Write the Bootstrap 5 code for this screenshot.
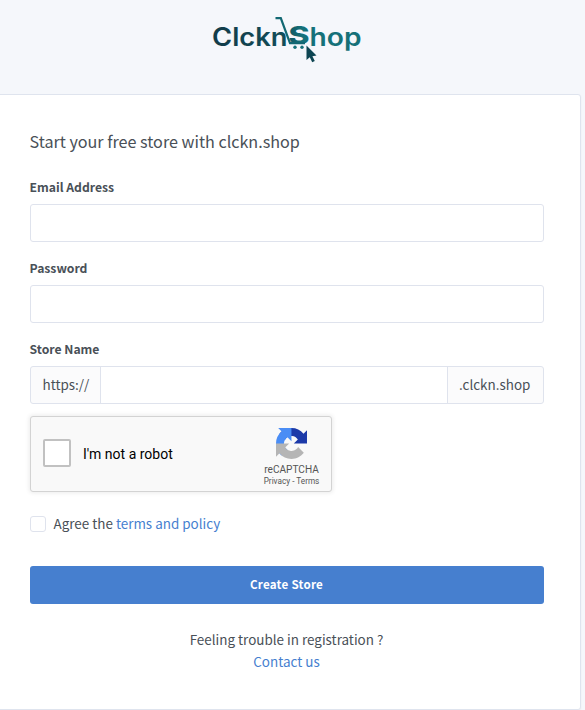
<!DOCTYPE html>
<html lang="en">
<head>
<meta charset="utf-8">
<meta name="viewport" content="width=device-width, initial-scale=1">
<title>Clckn Shop</title>
<link href="https://cdn.jsdelivr.net/npm/bootstrap@5.3.0/dist/css/bootstrap.min.css" rel="stylesheet">
<style>
body{background:#f5f7fb;color:#495057;font-family:"Noto Sans CJK SC","Noto Sans",sans-serif;font-size:13.45px;line-height:22px;height:710px;overflow:hidden}
a{color:#467fcf;text-decoration:none}
.brand-bar{height:94px;padding:10px 0 0 205px}
.signup{margin-left:-7px;width:588px;height:616px;border:1px solid #dfe4ee;border-radius:3px;box-shadow:0 1px 2px rgba(0,0,0,.05);padding:33px 36px 0}
.signup h1{font-size:16.15px;line-height:26px;font-weight:400;margin:0 0 23px -.5px}
.form-label{font-size:12.2px;font-weight:700;line-height:20px;margin:0 0 7px -.5px;display:block;color:#495057}
.form-control,.input-group-text{height:38px;border-color:#dfe3ed;border-radius:3px;font-size:13.45px;color:#495057}
.input-group-text{background:#fbfbfc;padding:0 12px 2px 11.5px;line-height:22px}
.scheme{width:71px}
.domain{width:97px;padding-left:11px}
.field{margin-bottom:16px}
.captcha{width:302px;height:76px;margin-top:12px;background:#f9f9f9;border:1px solid #d3d3d3;border-radius:3px;box-shadow:0 0 4px 1px rgba(0,0,0,.08);font-family:Roboto,sans-serif;color:#000;padding-left:12px}
.robot-box{width:28px;height:28px;margin-top:-2px;border:2px solid #c1c1c1;border-radius:2px;background:#fff}
.robot-text{font-size:14px;margin-left:12px}
.captcha-brand{width:79px;padding-top:11px;color:#555}
.captcha-name{font-size:10.1px;line-height:10px;margin-top:6px}
.captcha-links{font-size:8.2px;line-height:10px;margin-top:1px}
.agree{margin-top:20px;height:24px}
.agree-box{width:16px;height:16px;border:1px solid #dfe3ed;border-radius:3px;background:#fff}
.agree-text{margin:-3px 0 0 7.5px}
.btn-create{height:38px;margin-top:30px;background:#467fcf;color:#fff;border:0;border-radius:3px;font-size:11.6px;font-weight:700;letter-spacing:.25px;line-height:22px;padding:0 1px 3px 0}
.help{margin:24px 1px 0 0}
</style>
</head>
<body>
<header class="brand-bar">
<svg class="d-block" width="165" height="60" viewBox="0 0 165 60" role="img" aria-label="ClcknShop">
<defs><linearGradient id="ink" gradientUnits="userSpaceOnUse" x1="8" y1="0" x2="156" y2="0"><stop offset="0" stop-color="#123b49"/><stop offset=".48" stop-color="#114d58"/><stop offset=".6" stop-color="#14717a"/><stop offset="1" stop-color="#167078"/></linearGradient></defs>
<g fill="url(#ink)" font-family="Inter, sans-serif" font-weight="600" font-size="25">
<text x="7" y="35.5" textLength="75.500" lengthAdjust="spacingAndGlyphs">Clckn</text>
<text x="83.500" y="33.500" font-weight="800" font-size="24" textLength="21" lengthAdjust="spacingAndGlyphs">S</text>
<text x="104.500" y="35.500" textLength="52" lengthAdjust="spacingAndGlyphs">hop</text>
</g>
<path d="M70.500 8.200h5.300L85 33.200H100" fill="none" stroke="#126873" stroke-width="2.200"/>
<circle cx="90" cy="37.300" r="1.700" fill="#14717a"/><circle cx="97" cy="37.300" r="1.700" fill="#14717a"/>
<path d="M101.500 35.500v14.500l3.300-2.800 2.400 5 2.600-1.200-2.400-4.800 4.100-.6z" fill="#0d4552"/>
</svg>
</header>
<main class="card signup">
<h1>Start your free store with clckn.shop</h1>
<form>
<div class="field"><label class="form-label" for="email">Email Address</label><input id="email" type="email" class="form-control"></div>
<div class="field"><label class="form-label" for="password">Password</label><input id="password" type="password" class="form-control"></div>
<label class="form-label" for="store">Store Name</label>
<div class="input-group"><span class="input-group-text scheme">https://</span><input id="store" class="form-control"><span class="input-group-text domain">.clckn.shop</span></div>
<div class="captcha d-flex align-items-center">
<div class="robot-box flex-shrink-0"></div><span class="robot-text">I'm not a robot</span>
<div class="captcha-brand ms-auto align-self-start text-center">
<svg class="d-block mx-auto" width="31" height="31" viewBox="0 0 64 64"><path d="M64 31.950a33 33 0 0 0-.020-1.370V4.600l-7.180 7.180A31.900 31.900 0 0 0 32.080.080C21.660.080 12.400 5.070 6.560 12.800L18.330 24.690a15.600 15.600 0 0 1 4.770-5.350c2.060-1.610 4.980-2.920 9-2.920.490 0 .860.060 1.140.160 4.990.4 9.310 3.150 11.860 7.140l-8.330 8.330z" fill="#1c3aa9"/><path d="M31.860.080a33 33 0 0 0-1.370.020H4.510l7.180 7.180A31.900 31.900 0 0 0 0 32c0 10.420 4.980 19.680 12.700 25.520L24.600 45.750a15.600 15.600 0 0 1-5.350-4.770c-1.610-2.060-2.920-4.980-2.920-9 0-.490.060-.860.160-1.140.4-4.990 3.150-9.310 7.140-11.860l8.330 8.330z" fill="#4a8df5"/><path d="M0 31.950q0 .690.020 1.370V59.300l7.180-7.180A31.900 31.900 0 0 0 31.920 63.820c10.420 0 19.680-4.980 25.520-12.700L45.670 39.210a15.600 15.600 0 0 1-4.770 5.350c-2.060 1.610-4.980 2.920-9 2.920-.490 0-.860-.060-1.140-.160-4.990-.4-9.310-3.150-11.860-7.140l8.330-8.330z" fill="#b5b5b5"/></svg>
<div class="captcha-name">reCAPTCHA</div><div class="captcha-links">Privacy - Terms</div>
</div></div>
<div class="agree d-flex align-items-center"><span class="agree-box"></span><span class="agree-text">Agree the <a href="#">terms and policy</a></span></div>
<button type="button" class="btn btn-create w-100 d-block">Create Store</button>
</form>
<div class="help text-center">Feeling trouble in registration ?<br><a href="#">Contact us</a></div>
</main>
<script src="https://cdn.jsdelivr.net/npm/bootstrap@5.3.0/dist/js/bootstrap.bundle.min.js"></script>
</body>
</html>
